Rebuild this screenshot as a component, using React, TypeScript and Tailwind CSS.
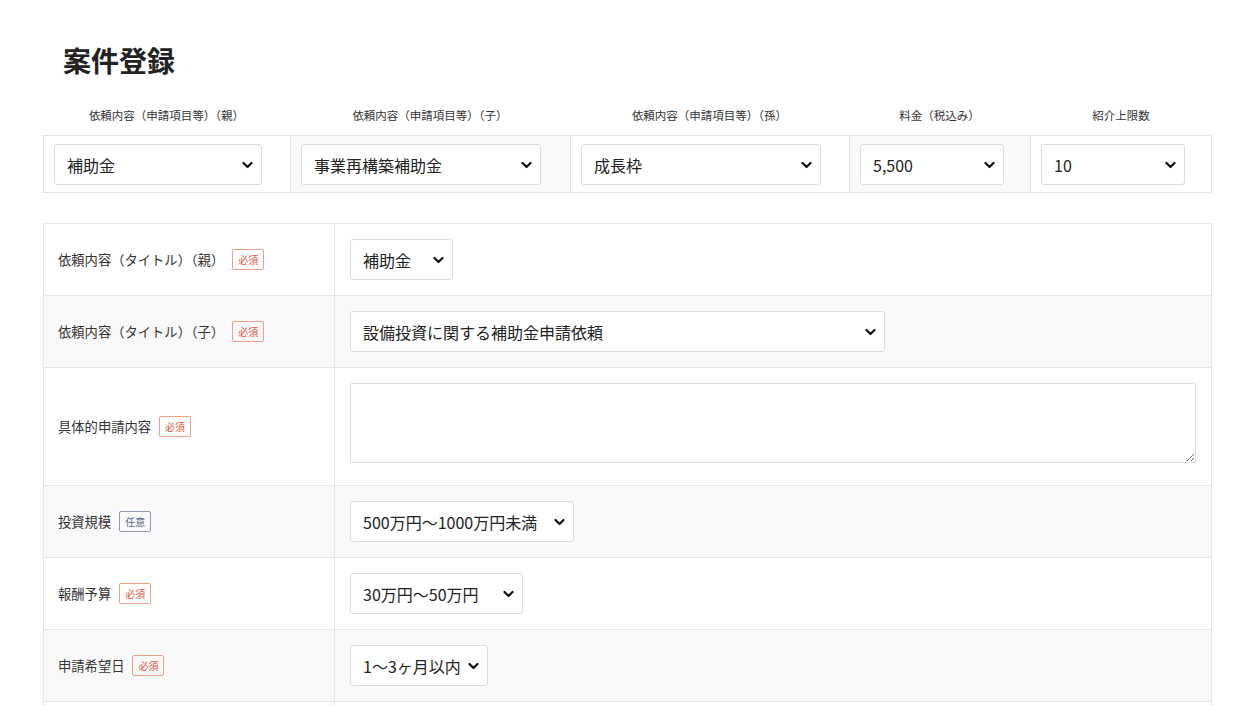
import React from "react";

const Chevron: React.FC = () => (
	<svg
		className="pointer-events-none absolute right-[9px] top-1/2 -translate-y-1/2"
		width="11"
		height="8"
		viewBox="0 0 11 8"
		fill="none"
	>
		<path d="M1.5 2L5.5 6L9.5 2" stroke="#111" strokeWidth="2.2" strokeLinecap="round" strokeLinejoin="round" />
	</svg>
);

type SelectProps = { value: string; width: string };

const Select: React.FC<SelectProps> = ({ value, width }) => (
	<div className={`relative ${width}`}>
		<select
			defaultValue={value}
			className="h-[41px] w-full appearance-none rounded-[3px] border border-[#dcdcdc] bg-white pl-[12px] pr-[22px] text-[16px] text-[#222] outline-none"
		>
			<option>{value}</option>
		</select>
		<Chevron />
	</div>
);

const Badge: React.FC<{ optional?: boolean }> = ({ optional }) =>
	optional ? (
		<span className="ml-[8px] inline-flex h-[21px] w-[32px] items-center justify-center rounded-[2px] border border-[#8e9ab3] text-[10px] text-[#5b6a8a]">
			任意
		</span>
	) : (
		<span className="ml-[8px] inline-flex h-[21px] w-[32px] items-center justify-center rounded-[2px] border border-[#ef9f86] text-[10px] text-[#e2553e]">
			必須
		</span>
	);

const topColumns = [
	{ label: "依頼内容（申請項目等）（親）", value: "補助金", width: "w-[208px]", gray: false },
	{ label: "依頼内容（申請項目等）（子）", value: "事業再構築補助金", width: "w-[240px]", gray: true },
	{ label: "依頼内容（申請項目等）（孫）", value: "成長枠", width: "w-[240px]", gray: false },
	{ label: "料金（税込み）", value: "5,500", width: "w-[144px]", gray: true },
	{ label: "紹介上限数", value: "10", width: "w-[144px]", gray: false },
];

type Row = {
	label: string;
	optional?: boolean;
	value?: string;
	width?: string;
	textarea?: boolean;
};

const rows: Row[] = [
	{ label: "依頼内容（タイトル）（親）", value: "補助金", width: "w-[103px]" },
	{ label: "依頼内容（タイトル）（子）", value: "設備投資に関する補助金申請依頼", width: "w-[535px]" },
	{ label: "具体的申請内容", textarea: true },
	{ label: "投資規模", optional: true, value: "500万円〜1000万円未満", width: "w-[224px]" },
	{ label: "報酬予算", value: "30万円〜50万円", width: "w-[173px]" },
	{ label: "申請希望日", value: "1〜3ヶ月以内", width: "w-[138px]" },
	{ label: "備考", optional: true, textarea: true },
];

const App: React.FC = () => {
	return (
		<div className="min-h-screen bg-white font-['Noto_Sans_CJK_JP',sans-serif] text-[#333]">
			<div className="ml-[43px] w-[1169px] pb-10 pt-[39px]">
				<h1 className="pl-[20px] text-[28px] font-bold leading-[42px] text-[#222]">案件登録</h1>

				{/* 上部の選択テーブル */}
				<div className="mt-[26px] grid grid-cols-[247px_280px_279px_181px_182px]">
					{topColumns.map((col) => (
						<div key={col.label} className="text-center text-[11.5px] leading-[17px] text-[#333]">
							{col.label}
						</div>
					))}
				</div>
				<div className="mt-[11px] grid grid-cols-[246px_280px_279px_181px_181px] border border-[#e2e2e2]">
					{topColumns.map((col, i) => (
						<div
							key={col.label}
							className={`px-[10px] pb-[7px] pt-2 ${i > 0 ? "border-l border-[#e2e2e2]" : ""} ${
								col.gray ? "bg-[#f9f9f9]" : "bg-white"
							}`}
						>
							<Select value={col.value} width={col.width} />
						</div>
					))}
				</div>

				{/* 入力フォーム */}
				<div className="mt-[30px] border-l border-r border-t border-[#e6e6e6]">
					{rows.map((row, i) => (
						<div
							key={row.label}
							className={`grid grid-cols-[291px_1fr] border-b border-[#e6e6e6] ${
								i % 2 === 1 ? "bg-[#f9f9f9]" : "bg-white"
							}`}
						>
							<div className="flex items-center border-r border-[#e6e6e6] px-[14px] text-[13.3px] text-[#333]">
								<span>{row.label}</span>
								<Badge optional={row.optional} />
							</div>
							<div className="px-[15px] py-[15px]">
								{row.textarea ? (
									<textarea className="mb-[7px] block h-[80px] w-full resize-y rounded-[2px] border border-[#dcdcdc] bg-white outline-none" />
								) : (
									<Select value={row.value ?? ""} width={row.width ?? ""} />
								)}
							</div>
						</div>
					))}
				</div>
			</div>
		</div>
	);
};

export default App;
